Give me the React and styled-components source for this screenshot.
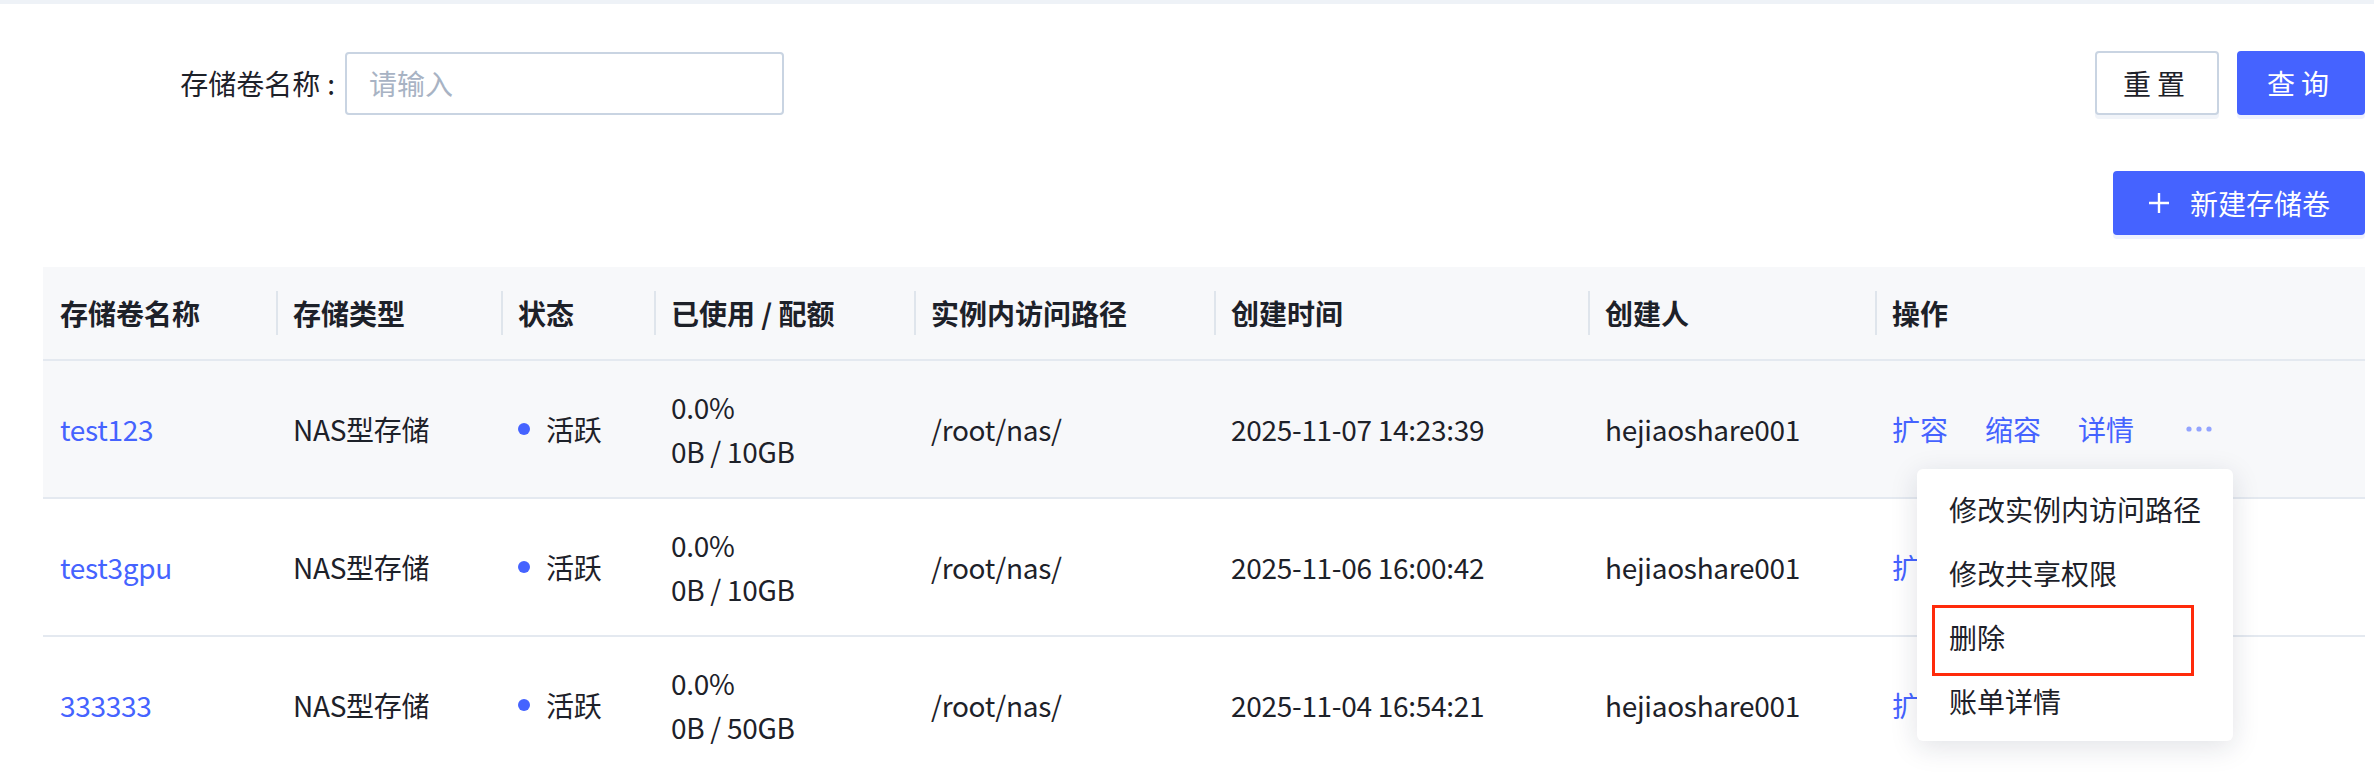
import React from 'react'
import styled, { createGlobalStyle } from 'styled-components'

const GlobalStyle = createGlobalStyle`
  html, body {
    margin: 0;
    padding: 0;
    background: #fff;
    overflow: hidden;
  }
  body {
    font-family: "Noto Sans CJK SC", "Noto Sans", sans-serif;
    color: #1d2129;
  }
  * { box-sizing: border-box; }
`

const TopStrip = styled.div`
  height: 4px;
  background: #eef2f7;
`

const Page = styled.div`
  padding: 0 9px 0 0;
`

const SearchBar = styled.div`
  display: flex;
  align-items: center;
  justify-content: space-between;
  margin-top: 47px;
  height: 64px;
`

const FormItem = styled.div`
  display: flex;
  align-items: center;
`

const Label = styled.label`
  width: 345px;
  padding-right: 10px;
  text-align: right;
  font-size: 28px;
  color: #1d2129;
`

const Colon = styled.span`
  margin-left: 7px;
`

const Input = styled.input`
  width: 439px;
  height: 63px;
  border: 2px solid #c9d4e2;
  border-radius: 4px;
  padding: 0 22px;
  font-family: inherit;
  font-size: 28px;
  color: #1d2129;
  outline: none;
  &::placeholder { color: #a8b3c4; }
`

const ButtonGroup = styled.div`
  display: flex;
  gap: 18px;
`

const Button = styled.button`
  height: 64px;
  min-width: ${p => p.$width || 124}px;
  padding: 0 ${p => p.$pad || 0}px;
  border-radius: 4px;
  font-family: inherit;
  font-size: 28px;
  letter-spacing: ${p => p.$spaced ? '6px' : '0'};
  display: flex;
  align-items: center;
  justify-content: center;
  gap: 20px;
  cursor: pointer;
  border: 2px solid ${p => p.$primary ? '#4563ff' : '#c9d4e2'};
  background: ${p => p.$primary ? '#4563ff' : '#fff'};
  color: ${p => p.$primary ? '#fff' : '#1d2129'};
  box-shadow: 0 4px 0 ${p => p.$primary ? '#eef1ff' : '#f1f4f9'};
`

const Toolbar = styled.div`
  display: flex;
  justify-content: flex-end;
  margin-top: 56px;
`

const TableWrap = styled.div`
  margin: 32px 0 0 43px;
`

const Grid = styled.div`
  display: grid;
  grid-template-columns: 233px 225px 153px 260px 300px 374px 287px 1fr;
  background: ${p => p.$bg || '#fff'};
  border-bottom: 2px solid #e4e9f0;
`

const HeadCell = styled.div`
  position: relative;
  height: 92px;
  display: flex;
  align-items: center;
  padding-left: 17px;
  font-size: 28px;
  font-weight: 700;
  color: #1d2129;
  &:not(:first-child)::before {
    content: '';
    position: absolute;
    left: 0;
    top: 24px;
    bottom: 24px;
    width: 2px;
    background: #dfe5ec;
  }
`

const Cell = styled.div`
  position: relative;
  height: 136px;
  display: flex;
  flex-direction: ${p => p.$stack ? 'column' : 'row'};
  justify-content: ${p => p.$stack ? 'center' : 'flex-start'};
  align-items: ${p => p.$stack ? 'flex-start' : 'center'};
  padding-left: 17px;
  font-size: 28px;
  line-height: 44px;
  letter-spacing: -0.3px;
  color: #1d2129;
`

const Link = styled.a`
  color: #4563ff;
  text-decoration: none;
  cursor: pointer;
`

const Dot = styled.span`
  flex: none;
  width: 12px;
  height: 12px;
  border-radius: 50%;
  background: #4563ff;
  margin: 0 16px 0 0;
`

const Ops = styled.div`
  display: flex;
  align-items: center;
  gap: 37px;
  letter-spacing: 0;
`

const More = styled.span`
  display: flex;
  align-items: center;
  margin-left: 14px;
  color: #93a4ff;
`

const Menu = styled.div`
  position: absolute;
  left: 42px;
  top: 108px;
  z-index: 10;
  width: 316px;
  padding: 8px 0;
  background: #fff;
  border-radius: 6px;
  letter-spacing: 0;
  box-shadow: 0 6px 28px rgba(20, 30, 60, 0.13);
`

const MenuItem = styled.div`
  position: relative;
  height: 64px;
  display: flex;
  align-items: center;
  padding-left: 32px;
  font-size: 28px;
  color: #1d2129;
  white-space: nowrap;
  ${p => p.$marked && `
    &::after {
      content: '';
      position: absolute;
      left: 15px;
      top: 0;
      width: 256px;
      height: 65px;
      border: 3px solid #ff2a0a;
    }
  `}
`

const columns = ['存储卷名称', '存储类型', '状态', '已使用 / 配额', '实例内访问路径', '创建时间', '创建人', '操作']

const rows = [
  { name: 'test123', quota: '0B / 10GB', time: '2025-11-07 14:23:39' },
  { name: 'test3gpu', quota: '0B / 10GB', time: '2025-11-06 16:00:42' },
  { name: '333333', quota: '0B / 50GB', time: '2025-11-04 16:54:21' },
]

const menuItems = ['修改实例内访问路径', '修改共享权限', '删除', '账单详情']

const MoreIcon = () => (
  <svg width="28" height="8" viewBox="0 0 28 8">
    <circle cx="4" cy="4" r="2.6" fill="currentColor" />
    <circle cx="14" cy="4" r="2.6" fill="currentColor" />
    <circle cx="24" cy="4" r="2.6" fill="currentColor" />
  </svg>
)

const PlusIcon = () => (
  <svg width="22" height="22" viewBox="0 0 22 22">
    <path d="M11 1v20M1 11h20" stroke="#fff" strokeWidth="2.4" />
  </svg>
)

const App = () => {
  return (
    <>
      <GlobalStyle />
      <TopStrip />
      <Page>
        <SearchBar>
          <FormItem>
            <Label>存储卷名称<Colon>:</Colon></Label>
            <Input placeholder="请输入" />
          </FormItem>
          <ButtonGroup>
            <Button $spaced>重置</Button>
            <Button $primary $spaced $width={128}>查询</Button>
          </ButtonGroup>
        </SearchBar>
        <Toolbar>
          <Button $primary $pad={33}>
            <PlusIcon />
            新建存储卷
          </Button>
        </Toolbar>
        <TableWrap>
          <Grid $bg="#f7f8fa">
            {columns.map(c => <HeadCell key={c}>{c}</HeadCell>)}
          </Grid>
          {rows.map((r, i) => (
            <Grid key={r.name} $bg={i === 0 ? '#f7f8fa' : '#fff'}>
              <Cell><Link>{r.name}</Link></Cell>
              <Cell>NAS型存储</Cell>
              <Cell><Dot />活跃</Cell>
              <Cell $stack>
                <span>0.0%</span>
                <span>{r.quota}</span>
              </Cell>
              <Cell>/root/nas/</Cell>
              <Cell>{r.time}</Cell>
              <Cell>hejiaoshare001</Cell>
              <Cell>
                <Ops>
                  <Link>扩容</Link>
                  <Link>缩容</Link>
                  <Link>详情</Link>
                  <More><MoreIcon /></More>
                </Ops>
                {i === 0 && (
                  <Menu>
                    {menuItems.map(m => (
                      <MenuItem key={m} $marked={m === '删除'}>{m}</MenuItem>
                    ))}
                  </Menu>
                )}
              </Cell>
            </Grid>
          ))}
        </TableWrap>
      </Page>
    </>
  )
}

export default App
